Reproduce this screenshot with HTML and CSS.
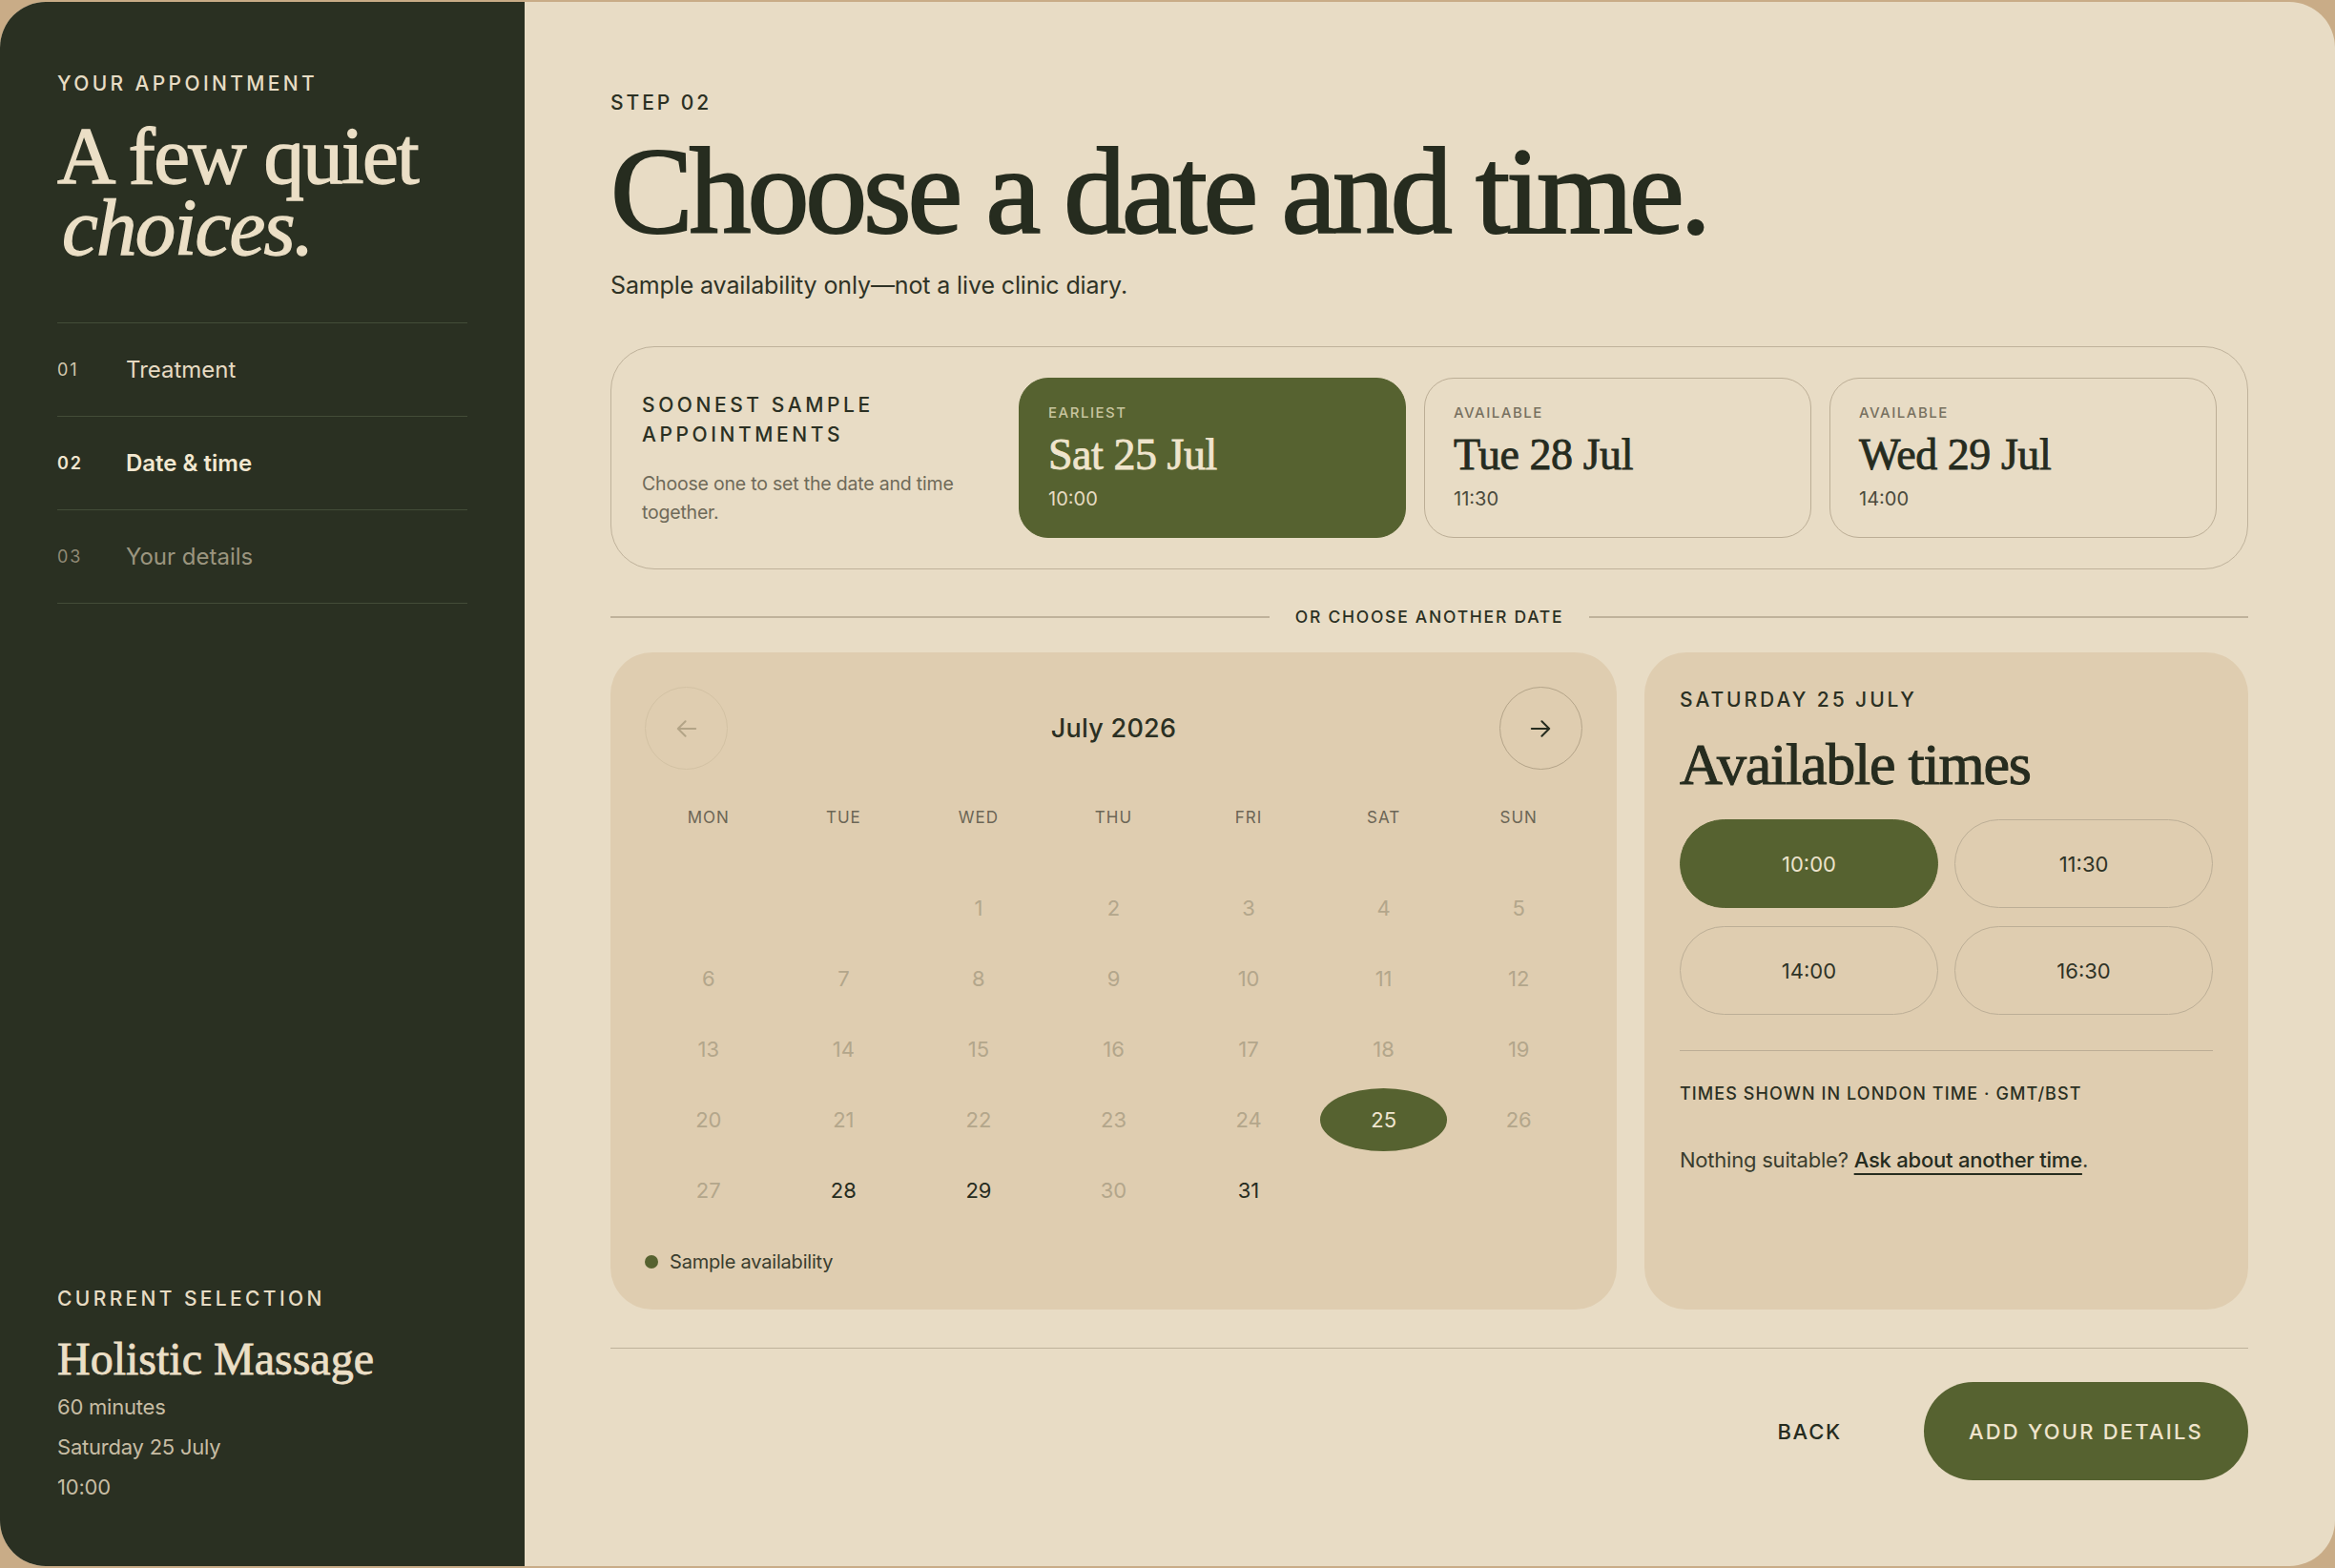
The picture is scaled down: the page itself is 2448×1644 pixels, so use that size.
FILE: index.html
```html
<!DOCTYPE html>
<html lang="en">
<head>
<meta charset="utf-8">
<title>Choose a date and time</title>
<link rel="stylesheet" href="styles.css">
</head>
<body>
<div class="frame">
  <aside class="sidebar">
    <div class="side-top">
      <p class="eyebrow">Your appointment</p>
      <h1 class="side-title"><span class="line">A few quiet</span><em class="line">choices.</em></h1>
      <ol class="steps">
        <li class="step done"><span class="step-num">01</span><span class="step-label">Treatment</span></li>
        <li class="step current"><span class="step-num">02</span><span class="step-label">Date &amp; time</span></li>
        <li class="step todo"><span class="step-num">03</span><span class="step-label">Your details</span></li>
      </ol>
    </div>
    <div class="selection">
      <p class="eyebrow">Current selection</p>
      <h2 class="sel-title">Holistic Massage</h2>
      <p class="sel-line">60 minutes</p>
      <p class="sel-line">Saturday 25 July</p>
      <p class="sel-line">10:00</p>
    </div>
  </aside>

  <main class="main">
    <p class="step-tag">Step 02</p>
    <h1 class="title">Choose a date and time.</h1>
    <p class="subtitle">Sample availability only—not a live clinic diary.</p>

    <section class="soonest">
      <div class="soonest-intro">
        <h3 class="soonest-title">Soonest sample appointments</h3>
        <p class="soonest-desc">Choose one to set the date and time together.</p>
      </div>
      <button class="slot selected">
        <span class="slot-tag">Earliest</span>
        <span class="slot-date">Sat 25 Jul</span>
        <span class="slot-time">10:00</span>
      </button>
      <button class="slot">
        <span class="slot-tag">Available</span>
        <span class="slot-date">Tue 28 Jul</span>
        <span class="slot-time">11:30</span>
      </button>
      <button class="slot">
        <span class="slot-tag">Available</span>
        <span class="slot-date">Wed 29 Jul</span>
        <span class="slot-time">14:00</span>
      </button>
    </section>

    <div class="or-divider"><span>Or choose another date</span></div>

    <div class="panels">
      <section class="calendar">
        <div class="cal-head">
          <button class="nav-btn prev" aria-label="Previous month">
            <svg viewBox="0 0 24 24" width="34" height="34" fill="none" stroke="currentColor" stroke-width="1.4" stroke-linecap="round" stroke-linejoin="round"><path d="M18.5 12h-13M11 6.5 5.5 12l5.5 5.5"/></svg>
          </button>
          <span class="cal-month">July 2026</span>
          <button class="nav-btn next" aria-label="Next month">
            <svg viewBox="0 0 24 24" width="34" height="34" fill="none" stroke="currentColor" stroke-width="1.4" stroke-linecap="round" stroke-linejoin="round"><path d="M5.5 12h13M13 6.5l5.5 5.5-5.5 5.5"/></svg>
          </button>
        </div>
        <div class="weekdays">
          <span>Mon</span><span>Tue</span><span>Wed</span><span>Thu</span><span>Fri</span><span>Sat</span><span>Sun</span>
        </div>
        <div class="days">
          <span class="day empty"></span><span class="day empty"></span>
          <span class="day off">1</span><span class="day off">2</span><span class="day off">3</span><span class="day off">4</span><span class="day off">5</span>
          <span class="day off">6</span><span class="day off">7</span><span class="day off">8</span><span class="day off">9</span><span class="day off">10</span><span class="day off">11</span><span class="day off">12</span>
          <span class="day off">13</span><span class="day off">14</span><span class="day off">15</span><span class="day off">16</span><span class="day off">17</span><span class="day off">18</span><span class="day off">19</span>
          <span class="day off">20</span><span class="day off">21</span><span class="day off">22</span><span class="day off">23</span><span class="day off">24</span><span class="day selected">25</span><span class="day off">26</span>
          <span class="day off">27</span><span class="day on">28</span><span class="day on">29</span><span class="day off">30</span><span class="day on">31</span><span class="day empty"></span><span class="day empty"></span>
        </div>
        <p class="legend"><span class="dot"></span>Sample availability</p>
      </section>

      <section class="times">
        <p class="times-date">Saturday 25 July</p>
        <h2 class="times-title">Available times</h2>
        <div class="pills">
          <button class="pill selected">10:00</button>
          <button class="pill">11:30</button>
          <button class="pill">14:00</button>
          <button class="pill">16:30</button>
        </div>
        <p class="tz">Times shown in London time · GMT/BST</p>
        <p class="ask">Nothing suitable? <a href="#">Ask about another time</a>.</p>
      </section>
    </div>

    <div class="actions">
      <button class="back">Back</button>
      <button class="primary">Add your details</button>
    </div>
  </main>
</div>
</body>
</html>
```
FILE: styles.css
```css
* { box-sizing: border-box; margin: 0; padding: 0; }
html, body { height: 100%; }
body {
  background: #c9ac87;
  font-family: Inter, "Noto Sans", sans-serif;
  color: #262c1f;
}
button { font-family: inherit; background: none; border: none; color: inherit; cursor: pointer; }

.frame {
  display: flex;
  height: calc(100vh - 4px);
  margin: 2px 0;
  border-radius: 48px;
  overflow: hidden;
  background: #e8dcc5;
}

/* ---------- Sidebar ---------- */
.sidebar {
  width: 550px;
  flex: none;
  background: #2a3022;
  color: #e9ddc4;
  padding: 73px 60px 62px;
  display: flex;
  flex-direction: column;
  justify-content: space-between;
}
.eyebrow {
  font-size: 21px;
  line-height: 25px;
  font-weight: 500;
  letter-spacing: 0.16em;
  text-transform: uppercase;
  color: #e7dcc4;
}
.side-title {
  margin-top: 26px;
  font-family: "Liberation Serif", "DejaVu Serif", serif;
  font-weight: 400;
  font-size: 85px;
  letter-spacing: -0.02em;
  color: #ebdfc6;
  -webkit-text-stroke: 1.3px #ebdfc6;
}
.side-title .line { display: block; height: 75px; line-height: 75px; }
.side-title em { font-style: italic; padding-left: 5px; }
.steps { list-style: none; margin-top: 62px; border-bottom: 1.5px solid #434c38; }
.step {
  display: flex;
  align-items: center;
  height: 98px;
  border-top: 1.5px solid #434c38;
}
.step-num { width: 72px; font-size: 18px; letter-spacing: 0.1em; }
.step-label { font-size: 24px; }
.step.done .step-num { color: #d2c7ae; }
.step.done .step-label { color: #e6dac2; }
.step.current .step-num { color: #f1e6cf; font-weight: 600; }
.step.current .step-label { color: #f3e8d1; font-weight: 600; }
.step.todo .step-num { color: #8f8a76; }
.step.todo .step-label { color: #9b957f; }

.sel-title {
  margin-top: 23px;
  margin-bottom: 2px;
  font-family: "Liberation Serif", "DejaVu Serif", serif;
  font-weight: 400;
  font-size: 48px;
  line-height: 55px;
  color: #ebdfc6;
  -webkit-text-stroke: 0.8px #ebdfc6;
}
.sel-line { font-size: 22px; line-height: 42px; color: #c7bda4; letter-spacing: -0.01em; }

/* ---------- Main ---------- */
.main {
  flex: 1;
  min-width: 0;
  padding: 93px 91px 0 90px;
  display: flex;
  flex-direction: column;
}
.step-tag {
  font-size: 21px;
  line-height: 25px;
  font-weight: 500;
  letter-spacing: 0.14em;
  text-transform: uppercase;
  color: #2b3023;
}
.title {
  margin-top: 15px;
  font-family: "Liberation Serif", "DejaVu Serif", serif;
  font-weight: 400;
  font-size: 130px;
  line-height: 1;
  letter-spacing: -0.032em;
  color: #262c1f;
  -webkit-text-stroke: 2px #262c1f;
}
.subtitle {
  margin-top: 17px;
  font-size: 25px;
  line-height: 34px;
  letter-spacing: -0.005em;
  color: #2f3326;
}

/* Soonest */
.soonest {
  margin-top: 47px;
  border: 1.5px solid #bfb29b;
  border-radius: 46px;
  padding: 32px;
  display: grid;
  grid-template-columns: 376px repeat(3, 1fr);
  gap: 19px;
  align-items: center;
}
.soonest-title {
  font-size: 21px;
  line-height: 31px;
  font-weight: 500;
  letter-spacing: 0.17em;
  text-transform: uppercase;
  color: #2b3023;
}
.soonest-desc {
  margin-top: 21px;
  font-size: 19.5px;
  line-height: 30px;
  color: #6f6a59;
  letter-spacing: -0.01em;
  padding-right: 20px;
}
.slot {
  display: flex;
  flex-direction: column;
  align-items: flex-start;
  text-align: left;
  height: 168px;
  padding: 27px 30px;
  border: 1.5px solid #bcae96;
  border-radius: 31px;
  color: #262c1f;
}
.slot.selected { background: #566230; border-color: #566230; color: #efe4cc; }
.slot-tag {
  font-size: 15px;
  line-height: 18px;
  font-weight: 500;
  letter-spacing: 0.1em;
  text-transform: uppercase;
  color: #77705f;
}
.slot.selected .slot-tag { color: #c8c59f; }
.slot-date {
  margin-top: 9px;
  font-family: "Liberation Serif", "DejaVu Serif", serif;
  font-size: 46px;
  line-height: 52px;
  letter-spacing: -0.01em;
  -webkit-text-stroke: 0.8px currentColor;
}
.slot-time { margin-top: 8px; font-size: 20px; line-height: 24px; color: #4a4a3c; }
.slot.selected .slot-time { color: #e6dcc2; }

/* Divider */
.or-divider {
  margin-top: 38px;
  display: flex;
  align-items: center;
  gap: 27px;
  font-size: 17.5px;
  line-height: 24px;
  font-weight: 500;
  letter-spacing: 0.1em;
  text-transform: uppercase;
  color: #2b3023;
}
.or-divider::before, .or-divider::after {
  content: "";
  flex: 1;
  height: 1.5px;
  background: #bfb29b;
}

/* Panels */
.panels {
  margin-top: 25px;
  display: grid;
  grid-template-columns: 5fr 3fr;
  gap: 29px;
}
.calendar, .times {
  background: #dfcdb0;
  border-radius: 44px;
}
.calendar { padding: 36px 36px 40px; }
.cal-head {
  display: flex;
  align-items: center;
  justify-content: space-between;
}
.nav-btn {
  width: 87px;
  height: 87px;
  border-radius: 50%;
  border: 1.5px solid #b4a489;
  display: flex;
  align-items: center;
  justify-content: center;
  color: #262c1f;
}
.nav-btn.prev { border-color: #d3c2a4; color: #b3a487; }
.cal-month { font-size: 27px; font-weight: 500; color: #2b3023; letter-spacing: 0.01em; }
.weekdays {
  margin-top: 40px;
  display: grid;
  grid-template-columns: repeat(7, 1fr);
  column-gap: 8px;
  text-align: center;
  font-size: 17px;
  line-height: 20px;
  letter-spacing: 0.06em;
  text-transform: uppercase;
  color: #6c6656;
}
.days {
  margin-top: 52px;
  display: grid;
  grid-template-columns: repeat(7, 1fr);
  grid-auto-rows: 66px;
  gap: 8px;
}
.day {
  display: flex;
  align-items: center;
  justify-content: center;
  border-radius: 50%;
  font-size: 22px;
}
.day.off { color: #b3a68b; }
.day.on { color: #262c1f; }
.day.selected { background: #566230; color: #f0e6d0; }
.legend {
  margin-top: 32px;
  display: flex;
  align-items: center;
  gap: 12px;
  font-size: 20px;
  line-height: 20px;
  color: #3a3d2e;
  letter-spacing: -0.01em;
}
.dot { width: 14px; height: 14px; border-radius: 50%; background: #566230; }

/* Times */
.times { padding: 37px; }
.times-date {
  font-size: 21px;
  line-height: 25px;
  font-weight: 500;
  letter-spacing: 0.14em;
  text-transform: uppercase;
  color: #2b3023;
}
.times-title {
  margin-top: 21px;
  font-family: "Liberation Serif", "DejaVu Serif", serif;
  font-weight: 400;
  font-size: 62px;
  line-height: 68px;
  letter-spacing: -0.02em;
  color: #262c1f;
  -webkit-text-stroke: 1px #262c1f;
}
.pills {
  margin-top: 24px;
  display: grid;
  grid-template-columns: 1fr 1fr;
  column-gap: 17px;
  row-gap: 19px;
  padding-bottom: 37px;
  border-bottom: 1.5px solid #bcae96;
}
.pill {
  height: 93px;
  border: 1.5px solid #bcae96;
  border-radius: 999px;
  font-size: 22px;
  color: #2f3326;
}
.pill.selected { background: #566230; border-color: #566230; color: #ece2cb; }
.tz {
  margin-top: 34px;
  font-size: 18px;
  line-height: 22px;
  font-weight: 500;
  letter-spacing: 0.06em;
  text-transform: uppercase;
  color: #2b3023;
}
.ask {
  margin-top: 43px;
  font-size: 22px;
  line-height: 30px;
  color: #3a3d2e;
  letter-spacing: -0.01em;
}
.ask a {
  color: #262c1f;
  font-weight: 500;
  text-decoration: underline;
  text-decoration-thickness: 1.5px;
  text-underline-offset: 6px;
}

/* Actions */
.actions {
  margin-top: 40px;
  border-top: 1.5px solid #bfb29b;
  padding-top: 35px;
  display: flex;
  justify-content: flex-end;
  align-items: center;
  gap: 60px;
}
.back {
  font-size: 22px;
  font-weight: 500;
  letter-spacing: 0.08em;
  text-transform: uppercase;
  color: #262c1f;
  padding: 20px 26px;
}
.primary {
  height: 103px;
  padding: 0 47px;
  border-radius: 999px;
  background: #566230;
  color: #efe4cc;
  font-size: 22px;
  font-weight: 500;
  letter-spacing: 0.1em;
  text-transform: uppercase;
}
```
